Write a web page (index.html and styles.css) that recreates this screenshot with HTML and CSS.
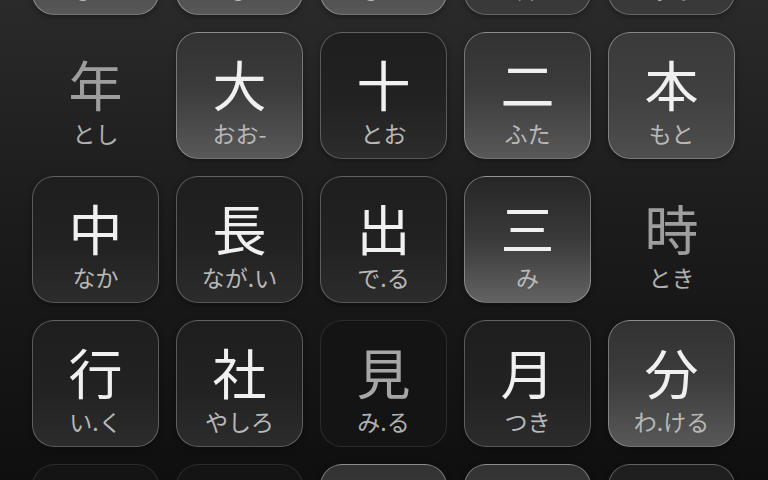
FILE: index.html
```html
<!DOCTYPE html>
<html lang="ja">
<head>
    <meta charset="utf-8">
    <title>Kanji</title>
    <link rel="stylesheet" href="styles.css">
</head>
<body>
    <div class="board">
        <!-- row 1 (scrolled off the top) -->
        <div class="tile glow"><span class="kanji">人</span><span class="kana">ひと</span></div>
        <div class="tile glow"><span class="kanji">日</span><span class="kana">ひ</span></div>
        <div class="tile glow"><span class="kanji">一</span><span class="kana">ひと</span></div>
        <div class="tile dim-top"><span class="kanji">国</span><span class="kana">くに</span></div>
        <div class="tile dim-top"><span class="kanji">会</span><span class="kana">あ.う</span></div>

        <!-- row 2 -->
        <div class="tile bare"><span class="kanji">年</span><span class="kana">とし</span></div>
        <div class="tile glow"><span class="kanji">大</span><span class="kana">おお-</span></div>
        <div class="tile dim"><span class="kanji">十</span><span class="kana">とお</span></div>
        <div class="tile glow"><span class="kanji">二</span><span class="kana">ふた</span></div>
        <div class="tile glow soft"><span class="kanji">本</span><span class="kana">もと</span></div>

        <!-- row 3 -->
        <div class="tile dim"><span class="kanji">中</span><span class="kana">なか</span></div>
        <div class="tile dim"><span class="kanji">長</span><span class="kana">なが.い</span></div>
        <div class="tile dim"><span class="kanji">出</span><span class="kana">で.る</span></div>
        <div class="tile glow strong"><span class="kanji">三</span><span class="kana">み</span></div>
        <div class="tile bare"><span class="kanji">時</span><span class="kana">とき</span></div>

        <!-- row 4 -->
        <div class="tile dim"><span class="kanji">行</span><span class="kana">い.く</span></div>
        <div class="tile dim"><span class="kanji">社</span><span class="kana">やしろ</span></div>
        <div class="tile faint"><span class="kanji">見</span><span class="kana">み.る</span></div>
        <div class="tile dim"><span class="kanji">月</span><span class="kana">つき</span></div>
        <div class="tile glow"><span class="kanji">分</span><span class="kana">わ.ける</span></div>

        <!-- row 5 (cut off at the bottom) -->
        <div class="tile faint"><span class="kanji">後</span><span class="kana">うし.ろ</span></div>
        <div class="tile faint"><span class="kanji">前</span><span class="kana">まえ</span></div>
        <div class="tile glow"><span class="kanji">生</span><span class="kana">い.きる</span></div>
        <div class="tile glow"><span class="kanji">五</span><span class="kana">いつ</span></div>
        <div class="tile dim"><span class="kanji">間</span><span class="kana">あいだ</span></div>
    </div>
</body>
</html>
```

FILE: styles.css
```css
html, body {
    margin: 0;
    height: 100%;
    overflow: hidden;
}

body {
    background: linear-gradient(to bottom, #2a2a2a 0%, #1c1c1c 45%, #0f0f0f 100%);
    font-family: "Noto Sans CJK JP", "Noto Sans", sans-serif;
    color: #f2f2f2;
}

.board {
    display: grid;
    grid-template-columns: repeat(5, 127px);
    grid-auto-rows: 127px;
    gap: 17px;
    margin-top: -112px;
    padding-left: 32px;
}

.tile {
    box-sizing: border-box;
    border-radius: 22px;
    border: 1px solid rgba(255, 255, 255, 0.28);
    display: flex;
    flex-direction: column;
    align-items: center;
    padding-top: 24px;
    box-shadow: 0 2px 6px rgba(0, 0, 0, 0.35);
}

.kanji {
    font-size: 54px;
    line-height: 1;
    color: #f0f0f0;
}

.kana {
    margin-top: 11px;
    font-size: 23px;
    line-height: 1;
    color: #b8b8b8;
}

.glow {
    background: linear-gradient(to bottom, #323232 0%, #3c3c3c 45%, #585858 100%);
    border-color: rgba(255, 255, 255, 0.32);
}

.glow.soft {
    background: linear-gradient(to bottom, #3a3a3a 0%, #404040 50%, #4e4e4e 100%);
}

.glow.strong {
    background: linear-gradient(to bottom, #262626 0%, #3a3a3a 50%, #626262 100%);
}

.dim-top {
    background: linear-gradient(to bottom, #2a2a2a 0%, #3a3a3a 100%);
}

.dim {
    background: linear-gradient(to bottom, #1e1e1e 0%, #222 55%, #2c2c2c 100%);
    border-color: rgba(255, 255, 255, 0.26);
}

.faint {
    background: #141414;
    border-color: rgba(255, 255, 255, 0.1);
    box-shadow: none;
}

.faint .kanji {
    color: #a6a6a6;
}

.faint .kana {
    color: #b0b0b0;
}

.bare {
    background: transparent;
    border-color: transparent;
    box-shadow: none;
}

.bare .kanji {
    color: #9e9e9e;
}

.bare .kana {
    color: #b0b0b0;
}
```
